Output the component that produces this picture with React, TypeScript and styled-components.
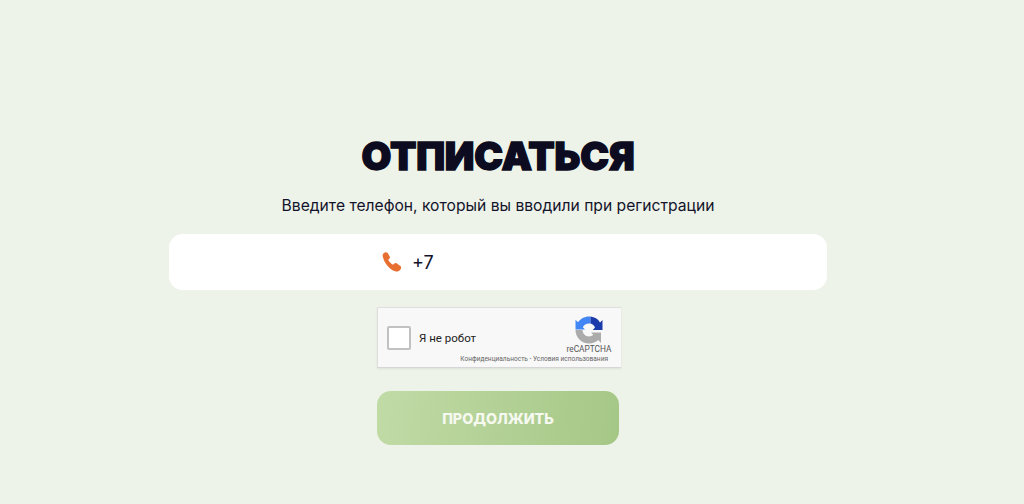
import React from "react";
import styled, { createGlobalStyle } from "styled-components";

const Global = createGlobalStyle`
  html, body { margin: 0; padding: 0; background: #eef3ea; }
  body { font-family: "Inter", "Liberation Sans", sans-serif; }
`;

const Page = styled.main`
  height: 504px;
  overflow: hidden;
  display: flex;
  flex-direction: column;
  align-items: center;
  padding-top: 136px;
  padding-right: 28px;
  box-sizing: border-box;
  background: #eef3ea;
`;

const Title = styled.h1`
  margin: 0;
  font-family: "Inter", "Liberation Sans", sans-serif;
  font-weight: 900;
  font-size: 38.5px;
  line-height: 40px;
  letter-spacing: -0.2px;
  color: #0c0b20;
  -webkit-text-stroke: 1.4px #0c0b20;
`;

const Subtitle = styled.p`
  margin: 19px 0 0;
  font-size: 15.65px;
  line-height: 22px;
  color: #13132b;
`;

const PhoneField = styled.label`
  width: 658px;
  height: 56px;
  margin-top: 17px;
  background: #fff;
  border-radius: 14px;
  display: flex;
  align-items: center;
  padding-left: 213px;
  gap: 10px;
  box-sizing: border-box;
`;

const PhoneInput = styled.input`
  border: 0;
  outline: 0;
  background: transparent;
  width: 200px;
  padding: 0;
  font-family: inherit;
  font-size: 18px;
  color: #13132b;
`;

const FormColumn = styled.div`
  width: 242px;
  display: flex;
  flex-direction: column;
`;

const Captcha = styled.div`
  width: 244px;
  height: 61px;
  margin-top: 17px;
  background: #f8f8f8;
  border: 1px solid #dfdfdf;
  border-right: 0;
  border-bottom-color: #d6d6d6;
  box-shadow: 0 1px 2px rgba(0, 0, 0, 0.08);
  box-sizing: border-box;
  display: grid;
  grid-template-columns: 1fr 60px;
  position: relative;
  font-family: "Roboto", "Liberation Sans", sans-serif;
`;

const CaptchaLeft = styled.div`
  display: flex;
  align-items: center;
  gap: 8px;
  padding: 0 0 0 9px;
  height: 59px;
`;

const CaptchaBox = styled.span`
  width: 24px;
  height: 24px;
  background: #fff;
  border: 2px solid #c1c1c1;
  border-radius: 2px;
  box-sizing: border-box;
`;

const CaptchaLabel = styled.span`
  font-size: 11.5px;
  color: #222;
`;

const CaptchaBrand = styled.div`
  display: flex;
  flex-direction: column;
  align-items: center;
  padding-top: 8px;
  padding-right: 4px;
`;

const BrandName = styled.span`
  font-size: 8.3px;
  line-height: 10px;
  color: #555;
  margin-top: 0;
`;

const CaptchaLinks = styled.span`
  position: absolute;
  right: 13px;
  bottom: 4px;
  font-size: 6.55px;
  line-height: 8px;
  color: #666;
  white-space: nowrap;
`;

const Submit = styled.button`
  width: 242px;
  height: 54px;
  margin-top: 23px;
  border: 0;
  border-radius: 14px;
  background: linear-gradient(100deg, #c1dba6 0%, #a5c786 100%);
  color: #f6f9f0;
  font-family: inherit;
  font-weight: 800;
  font-size: 14.3px;
  text-transform: uppercase;
`;

const PhoneIcon = () => (
  <svg width="20" height="20" viewBox="0 0 20 20" aria-hidden="true">
    <path
      fill="#e86f32"
      d="M0.6 4 C0.3 2.2 2.2 0.1 4.2 0.2 C5.2 0.3 5.8 0.9 6.2 1.8 L7.7 4.6 C8.2 5.6 7.9 6.4 7.1 7 L6.2 7.7 C7.1 9.7 8.9 11.6 11 12.7 L12.3 11.6 C13.1 11 13.9 10.9 14.8 11.5 L18.1 13.8 C19.1 14.5 19.4 15.5 19 16.6 C18.2 18.6 16.1 20 14.1 19.6 C7.4 18 2.1 11 0.6 4 Z"
    />
  </svg>
);

const RecaptchaLogo = () => (
  <svg width="28" height="28" viewBox="0 0 28 28" aria-hidden="true">
    <path fill="#ababab" d="M0.5 14 H7.5 C7.6 17.6 10.4 20.5 14 20.5 C15.7 20.5 17.2 19.9 18.3 18.8 L16 16.5 H26 V27 L23.3 24.1 C20.9 26.3 17.6 27.5 14 27.5 C6.5 27.5 0.5 21.5 0.5 14 Z" />
    <path fill="#4285f4" d="M14 0.5 C9.4 0.5 5.4 2.8 3 6.3 L0.5 3.8 V13.5 H10 L7.8 11.2 C8.8 9 11.2 7.5 14 7.5 H15.5 V0.6 Z" />
    <path fill="#1c3aa9" d="M15.5 0.6 C19.5 1 23 3.2 25 6.4 L27.5 4 V14 H17.8 L20 11.4 C19.2 9.6 17.6 8 15.5 7.6 Z" />
  </svg>
);

export default function App() {
  return (
    <>
      <Global />
      <Page>
        <Title>ОТПИСАТЬСЯ</Title>
        <Subtitle>Введите телефон, который вы вводили при регистрации</Subtitle>
        <PhoneField>
          <PhoneIcon />
          <PhoneInput type="tel" defaultValue="+7" />
        </PhoneField>
        <FormColumn>
          <Captcha>
            <CaptchaLeft>
              <CaptchaBox />
              <CaptchaLabel>Я не робот</CaptchaLabel>
            </CaptchaLeft>
            <CaptchaBrand>
              <RecaptchaLogo />
              <BrandName>reCAPTCHA</BrandName>
            </CaptchaBrand>
            <CaptchaLinks>Конфиденциальность - Условия использования</CaptchaLinks>
          </Captcha>
          <Submit type="button">Продолжить</Submit>
        </FormColumn>
      </Page>
    </>
  );
}
